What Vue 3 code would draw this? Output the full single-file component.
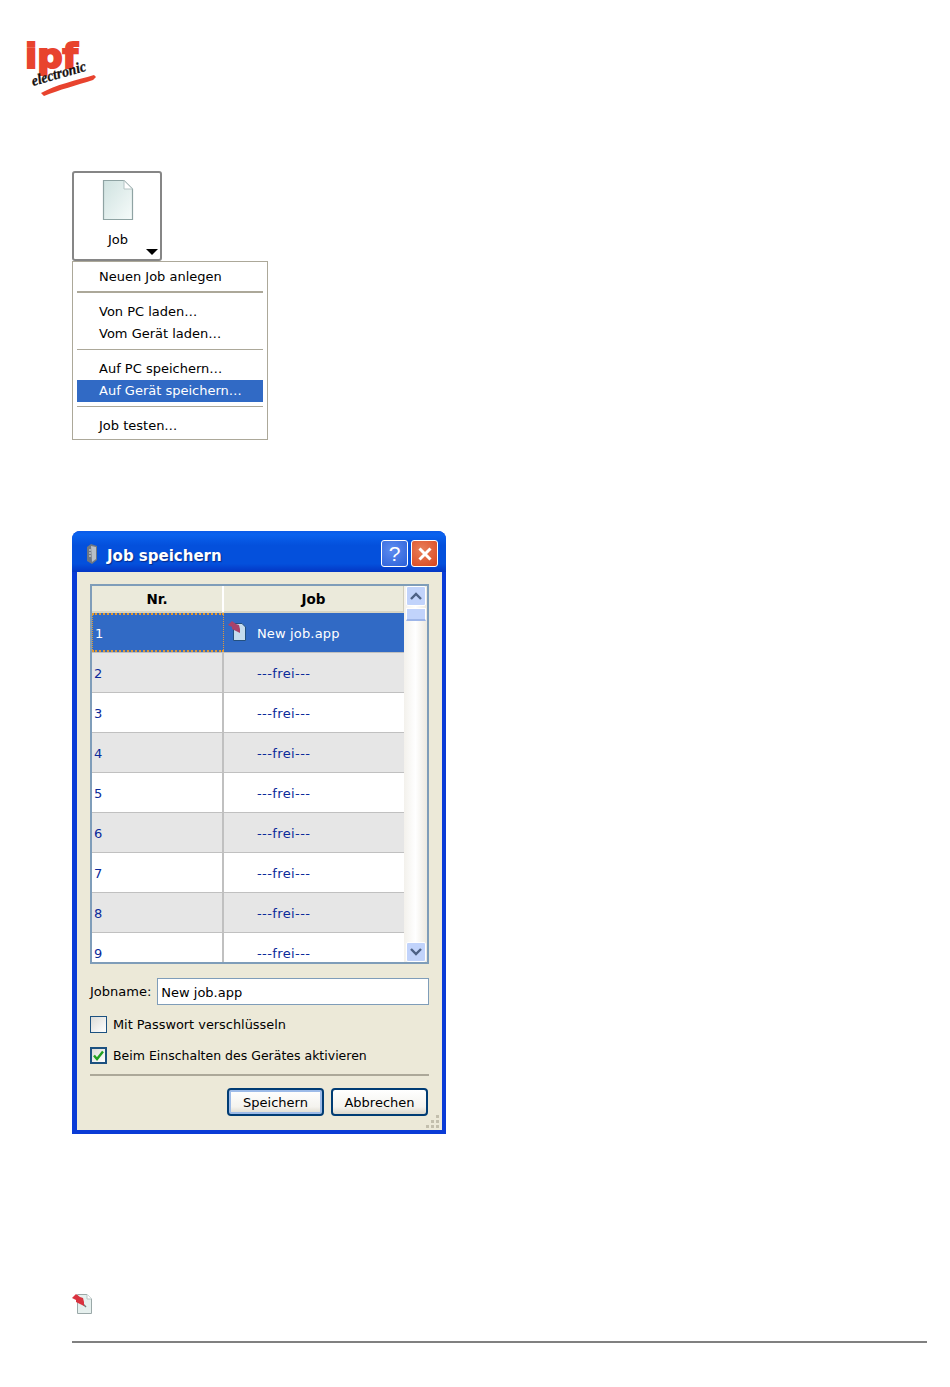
<script setup>
const menu = [
  [{ t: 'Neuen Job anlegen' }],
  [{ t: 'Von PC laden…' }, { t: 'Vom Gerät laden…' }],
  [{ t: 'Auf PC speichern…' }, { t: 'Auf Gerät speichern…', active: true }],
  [{ t: 'Job testen…' }]
]
const rows = [1, 2, 3, 4, 5, 6, 7, 8, 9]
</script>

<template>
  <div class="page">
    <svg class="logo" width="72" height="56" viewBox="0 0 72 56">
      <text x="0" y="27" class="logo-ipf" textLength="53" lengthAdjust="spacingAndGlyphs">ipf</text>
      <text x="8" y="45" class="logo-el" transform="rotate(-16 8 45)" textLength="56" lengthAdjust="spacingAndGlyphs">electronic</text>
      <path d="M16 52 C30 44 52 39 69 34 L71 36 L68 39 C52 44 34 49 19 55 Z" fill="#e8432e" />
    </svg>

    <div class="job-btn">
      <svg width="32" height="42" viewBox="0 0 32 42">
        <defs>
          <linearGradient id="paper" x1="0" y1="0" x2="1" y2="1">
            <stop offset="0" stop-color="#cfe2e0" />
            <stop offset="1" stop-color="#f6fbfa" />
          </linearGradient>
        </defs>
        <path d="M1.5 1.5H22L30.5 10V40.5H1.5Z" fill="url(#paper)" stroke="#8fa3a3" stroke-width="1.2" />
        <path d="M22 1.5V10H30.5Z" fill="#fff" stroke="#b5c4c4" />
      </svg>
      <span class="job-label">Job</span>
      <span class="caret"></span>
    </div>

    <div class="menu">
      <template v-for="(group, g) in menu" :key="g">
        <div v-if="g" class="menu-sep" :class="{ thick: g === 1 }"></div>
        <div v-for="item in group" :key="item.t" class="menu-item" :class="{ active: item.active }">{{ item.t }}</div>
      </template>
    </div>

    <div class="dialog">
      <div class="titlebar">
        <svg width="16" height="22" viewBox="0 0 16 22">
          <path d="M3 4 L7 1 L13 3 V17 L8 21 L3 18Z" fill="#6f7782" />
          <path d="M7 3 L12 4 V16 L8 19Z" fill="#b9bfc6" />
          <path d="M5 7H7M5 10H7M5 13H7" stroke="#e4e7ea" />
        </svg>
        <span class="title">Job speichern</span>
        <span class="tb-btn help">?</span>
        <span class="tb-btn close">
          <svg width="16" height="16" viewBox="0 0 16 16"><path d="M2.5 2.5L13.5 13.5M13.5 2.5L2.5 13.5" stroke="#fff" stroke-width="3" /></svg>
        </span>
      </div>

      <div class="body">
        <div class="table">
          <div class="grid-wrap">
            <div class="head">
              <div class="hcell">Nr.</div>
              <div class="hcell">Job</div>
            </div>
            <div class="tbody">
              <div v-for="r in rows" :key="r" class="row" :class="{ sel: r === 1, alt: r % 2 === 0 }">
                <div class="cell nr">{{ r }}</div>
                <div class="cell job">
                  <svg v-if="r === 1" class="pin" width="19" height="22" viewBox="0 0 19 22">
                    <path d="M5.5 3.5H14L17.5 7V20.5H5.5Z" fill="#c5dcee" stroke="#24507f" />
                    <path d="M0 5L4 1L8 4L11 5L12 9L12 13L8 11L4 9L4 7Z" fill="#a8426a" />
                  </svg>
                  <span class="job-text">{{ r === 1 ? 'New job.app' : '---frei---' }}</span>
                </div>
              </div>
            </div>
          </div>
          <div class="scroll">
            <div class="sb-btn">
              <svg width="12" height="8" viewBox="0 0 12 8"><path d="M1 7L6 2L11 7" fill="none" stroke="#4d6185" stroke-width="2.4" /></svg>
            </div>
            <div class="sb-thumb"></div>
            <div class="sb-track"></div>
            <div class="sb-btn">
              <svg width="12" height="8" viewBox="0 0 12 8"><path d="M1 1L6 6L11 1" fill="none" stroke="#4d6185" stroke-width="2.4" /></svg>
            </div>
          </div>
        </div>

        <div class="name-row">
          <span>Jobname:</span>
          <div class="input">New job.app</div>
        </div>

        <div class="check-row first">
          <span class="check"></span>
          <span>Mit Passwort verschlüsseln</span>
        </div>
        <div class="check-row second">
          <span class="check checked">
            <svg width="13" height="13" viewBox="0 0 13 13"><path d="M2 6.5L5 10L11 2.5" fill="none" stroke="#21a121" stroke-width="2.4" /></svg>
          </span>
          <span class="long">Beim Einschalten des Gerätes aktivieren</span>
        </div>

        <div class="dlg-sep"></div>

        <div class="buttons">
          <div class="btn default">Speichern</div>
          <div class="btn">Abbrechen</div>
        </div>

        <svg class="grip" width="14" height="14" viewBox="0 0 14 14" fill="#c3bfad">
          <rect x="10" y="1" width="3" height="3" /><rect x="5" y="6" width="3" height="3" /><rect x="10" y="6" width="3" height="3" />
          <rect x="0" y="11" width="3" height="3" /><rect x="5" y="11" width="3" height="3" /><rect x="10" y="11" width="3" height="3" />
        </svg>
      </div>
    </div>

    <svg class="foot-icon" width="21" height="22" viewBox="0 0 21 22">
      <path d="M5.5 1.5H15L19.5 6V20.5H5.5Z" fill="#e6f0ee" stroke="#9aa8a8" />
      <path d="M15 1.5V6H19.5" fill="#fff" stroke="#b8c4c4" />
      <path d="M10 10L14 14" stroke="#777" stroke-width="1.4" />
      <path d="M0 5L4 1L8 4L11 5L12 9L12 13L8 11L4 9L4 7Z" fill="#d9333f" />
    </svg>

    <div class="rule"></div>
  </div>
</template>

<style>
html, body { margin: 0; background: #fff; }
</style>

<style scoped>
.page {
  width: 950px;
  height: 1387px;
  box-sizing: border-box;
  padding-top: 41px;
  background: #fff;
  overflow: hidden;
  font-family: "DejaVu Sans", sans-serif;
  font-size: 13px;
  color: #000;
  display: flex;
  flex-direction: column;
  align-items: flex-start;
}
.logo { margin-left: 25px; display: block; overflow: visible; flex: none; }
.logo-ipf { font: 700 34px "DejaVu Sans", sans-serif; fill: #e8432e; stroke: #e8432e; stroke-width: 2px; }
.logo-el { font: italic 700 15px "Liberation Serif", serif; fill: #16110f; stroke: #16110f; stroke-width: 0.3px; }

.job-btn {
  margin: 74px 0 0 72px;
  width: 90px;
  height: 90px;
  box-sizing: border-box;
  border: 2px solid #868686;
  border-radius: 3px;
  position: relative;
  display: flex;
  flex-direction: column;
  align-items: center;
  padding: 6px 0 0 2px;
  flex: none;
}
.job-label { margin-top: 10px; font-size: 13px; line-height: 18px; }
.caret {
  position: absolute;
  right: 2px;
  bottom: 4px;
  width: 0;
  height: 0;
  border-left: 6px solid transparent;
  border-right: 6px solid transparent;
  border-top: 6px solid #000;
}

.menu {
  margin-left: 72px;
  width: 196px;
  box-sizing: border-box;
  border: 1px solid #aca899;
  padding: 4px 4px 2px;
  background: #fff;
  flex: none;
}
.menu-item {
  height: 22px;
  line-height: 22px;
  padding-left: 22px;
  white-space: nowrap;
  font-size: 13px;
}
.menu-item.active { background: #316ac5; color: #fff; }
.menu-sep { height: 1px; background: #aca899; margin: 4px 0 8px; }
.menu-sep.thick { height: 2px; margin: 3px 0 8px; }

.dialog {
  margin: 91px 0 0 72px;
  width: 374px;
  height: 603px;
  box-sizing: border-box;
  background: #0a3bd6;
  border-radius: 8px 8px 0 0;
  display: flex;
  flex-direction: column;
  overflow: hidden;
  flex: none;
}
.titlebar {
  height: 41px;
  box-sizing: border-box;
  padding: 4px 8px 0 12px;
  display: flex;
  align-items: center;
  flex: none;
  background: linear-gradient(#0a5ae8 0, #0a62ee 8%, #0450dc 35%, #0450dc 80%, #0436c4 100%);
}
.title {
  margin: 4px 0 0 7px;
  flex: 1;
  color: #fff;
  font-weight: 700;
  font-size: 15px;
  text-shadow: 1px 1px 1px #0a2a88;
}
.tb-btn {
  width: 27px;
  height: 27px;
  box-sizing: border-box;
  border: 1px solid #fff;
  border-radius: 3px;
  margin-left: 3px;
  display: flex;
  align-items: center;
  justify-content: center;
  color: #fff;
}
.help {
  background: radial-gradient(circle at 40% 35%, #5d8cf0, #2a5fd8);
  font-size: 21px;
  font-family: "Liberation Sans", sans-serif;
}
.close { background: radial-gradient(circle at 40% 35%, #e8805a, #d9441c); }

.body {
  flex: 1;
  margin: 0 4px 4px 5px;
  background: #ece9d8;
  padding: 12px 13px 0;
  position: relative;
  display: flex;
  flex-direction: column;
}
.table {
  height: 380px;
  box-sizing: border-box;
  border: 2px solid #7f9db9;
  background: #fff;
  display: flex;
  overflow: hidden;
  flex: none;
}
.grid-wrap { flex: 1; min-width: 0; display: flex; flex-direction: column; }
.head {
  height: 27px;
  flex: none;
  display: grid;
  grid-template-columns: 132px 181px;
  background: #ebeadb;
  border-bottom: 2px solid #d8d5c4;
  box-sizing: border-box;
}
.hcell {
  text-align: center;
  font-weight: 700;
  font-size: 13.5px;
  line-height: 26px;
  border-right: 2px solid #fff;
  box-sizing: border-box;
  margin-bottom: 2px;
}
.hcell:last-child { border-right-color: #d0cdbc; }
.tbody { flex: 1; overflow: hidden; }
.row {
  height: 40px;
  box-sizing: border-box;
  display: grid;
  grid-template-columns: 132px 181px;
  border-bottom: 1px solid #c0c0c0;
  color: #0a2a9a;
  background: #fff;
}
.row.alt { background: #e6e6e6; }
.row.sel { background: #316ac5; color: #fff; }
.cell {
  display: flex;
  align-items: center;
  box-sizing: border-box;
  border-right: 2px solid #c0c0c0;
  font-size: 13px;
  padding-top: 1px;
}
.cell:last-child { border-right-width: 1px; }
.nr { padding-left: 2px; }
.job { padding-left: 33px; position: relative; }
.job-text { letter-spacing: 0.15px; }
.row:not(.sel) .job-text { letter-spacing: 0.4px; }
.row.sel .cell { border-right-color: #316ac5; }
.row.sel .nr {
  border: 1px dotted #e59a2c;
  border-top-width: 2px;
  border-bottom-width: 2px;
}
.pin { position: absolute; left: 4px; top: 7px; }

.scroll {
  width: 23px;
  flex: none;
  display: flex;
  flex-direction: column;
  align-items: center;
  background: linear-gradient(90deg, #f3f1ec, #fff 50%, #ece9e0);
}
.sb-btn {
  width: 20px;
  height: 20px;
  flex: none;
  box-sizing: border-box;
  border: 1px solid #fff;
  border-radius: 2px;
  background: #c1d3fb;
  display: flex;
  align-items: center;
  justify-content: center;
}
.sb-thumb {
  width: 20px;
  height: 13px;
  margin-top: 2px;
  box-sizing: border-box;
  border: 1px solid #fff;
  border-bottom: 2px solid #9db5e8;
  background: #c1d3fb;
  flex: none;
}
.sb-track { flex: 1; }

.name-row {
  margin-top: 14px;
  height: 27px;
  display: flex;
  align-items: center;
  gap: 6px;
  flex: none;
}
.input {
  flex: 1;
  height: 27px;
  box-sizing: border-box;
  border: 1px solid #7f9db9;
  background: #fff;
  line-height: 27px;
  padding-left: 3px;
}
.check-row { display: flex; align-items: center; gap: 6px; height: 18px; flex: none; font-size: 12.9px; }
.check-row.first { margin-top: 10px; }
.check-row.second { margin-top: 13px; }
.long { font-size: 12.5px; }
.check {
  width: 17px;
  height: 17px;
  box-sizing: border-box;
  border: 1px solid #1c5180;
  background: linear-gradient(135deg, #dcdcd7, #fff);
  display: flex;
  align-items: center;
  justify-content: center;
}
.checked { border-width: 2px; }
.dlg-sep { height: 2px; background: #aca899; margin-top: 10px; flex: none; }
.buttons {
  margin-top: 12px;
  padding-right: 1px;
  display: flex;
  justify-content: flex-end;
  gap: 7px;
  flex: none;
}
.btn {
  width: 97px;
  height: 28px;
  box-sizing: border-box;
  border: 2px solid #003c74;
  border-radius: 4px;
  background: linear-gradient(#fff, #f4f3ee 70%, #dcd8cc);
  text-align: center;
  line-height: 26px;
  font-size: 13px;
}
.btn.default { box-shadow: inset 0 0 0 2px #9dbbe8; }
.grip { position: absolute; right: 2px; bottom: 2px; }

.foot-icon { margin: 159px 0 0 72px; display: block; flex: none; }
.rule { margin: 26px 0 0 72px; width: 855px; height: 2px; background: #808080; flex: none; }
</style>
